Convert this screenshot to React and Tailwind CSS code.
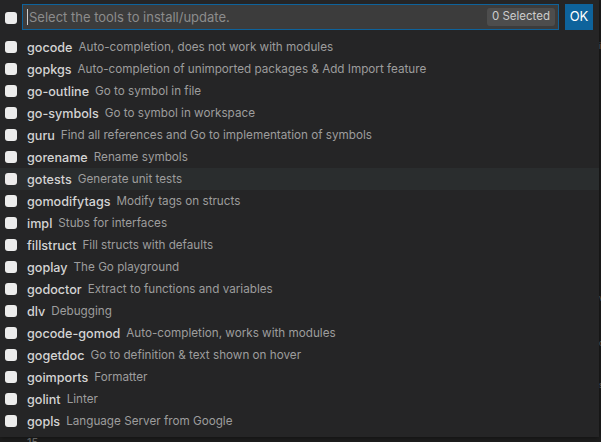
import React from "react";

const tools = [
  ["gocode", "Auto-completion, does not work with modules"],
  ["gopkgs", "Auto-completion of unimported packages & Add Import feature"],
  ["go-outline", "Go to symbol in file"],
  ["go-symbols", "Go to symbol in workspace"],
  ["guru", "Find all references and Go to implementation of symbols"],
  ["gorename", "Rename symbols"],
  ["gotests", "Generate unit tests"],
  ["gomodifytags", "Modify tags on structs"],
  ["impl", "Stubs for interfaces"],
  ["fillstruct", "Fill structs with defaults"],
  ["goplay", "The Go playground"],
  ["godoctor", "Extract to functions and variables"],
  ["dlv", "Debugging"],
  ["gocode-gomod", "Auto-completion, works with modules"],
  ["gogetdoc", "Go to definition & text shown on hover"],
  ["goimports", "Formatter"],
  ["golint", "Linter"],
  ["gopls", "Language Server from Google"],
];

function Box() {
  return <div className="w-[12px] h-[12px] rounded-[3px] bg-[#ececec] shrink-0" />;
}

export default function App() {
  return (
    <div
      className="w-[601px] h-[442px] bg-[#1e1e1e] overflow-hidden flex flex-col"
      style={{ fontFamily: "Inter, 'Noto Sans', sans-serif" }}
    >
      <div className="flex h-[437px] shrink-0">
        <div className="w-[599px] h-[437px] bg-[#252526] shadow-[0_0_6px_rgba(0,0,0,0.6)] z-10 shrink-0">
          <div className="h-[36px] pt-[4px] pl-[5px] flex items-start gap-[5px]">
            <div className="mt-[8px]">
              <Box />
            </div>
            <div className="w-[537px] h-[26px] border border-[#0e639c] bg-[#3c3c3c] flex items-center pl-[4px] pr-[3px]">
              <div className="w-[1px] h-[16px] bg-[#cccccc]" />
              <span className="ml-[1px] text-[13px] text-[#8c8c8c] flex-1 leading-none">
                Select the tools to install/update.
              </span>
              <span className="h-[18px] px-[5px] rounded-[3px] bg-[#4d4d4d] text-[#cccccc] text-[11.5px] flex items-center leading-none">
                0 Selected
              </span>
            </div>
            <div className="ml-[1px] w-[28px] h-[26px] bg-[#0e639c] text-white text-[13px] flex items-center justify-center">
              OK
            </div>
          </div>
          {tools.map(([name, desc]) => (
            <div
              key={name}
              className={
                "h-[22px] flex items-center pl-[5px] " +
                (name === "gotests" ? "bg-[#2a2d2e]" : "")
              }
            >
              <div className="-mt-[1px]">
                <Box />
              </div>
              <span className="ml-[10px] pt-[2px] text-[12.6px] font-medium text-[#d4d4d4] whitespace-nowrap">
                {name}
              </span>
              <span className="ml-[6px] pt-[2px] text-[11.7px] text-[#9d9d9d] whitespace-nowrap">
                {desc}
              </span>
            </div>
          ))}
        </div>
        <div className="flex-1 flex flex-col text-[8px] leading-none text-[#777] pt-[42px] overflow-hidden">
          <span className="text-[#888]">i</span>
          <span className="mt-[244px]">v</span>
          <span className="mt-[37px]">o</span>
          <span className="mt-[34px]">s</span>
        </div>
      </div>
      <div className="pl-[27px] text-[11px] leading-none text-[#777] overflow-hidden">15</div>
    </div>
  );
}
